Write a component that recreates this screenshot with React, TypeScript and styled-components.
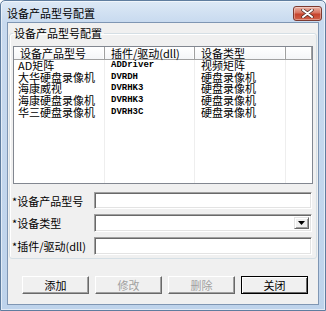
import React from 'react';
import styled, { createGlobalStyle } from 'styled-components';

const GlobalStyle = createGlobalStyle`
  html, body {
    margin: 0;
    padding: 0;
    background: #ffffff;
  }
  body {
    font-family: "Noto Sans CJK SC", "Liberation Sans", sans-serif;
    font-size: 11px;
    color: #000;
  }
  * {
    box-sizing: border-box;
  }
`;

const columns = [
  { title: '设备产品型号', width: 91, pad: 4 },
  { title: '插件/驱动(dll)', width: 90, pad: 6 },
  { title: '设备类型', width: 91, pad: 6 },
  { title: '', width: 26, pad: 6 },
];

const rows = [
  ['AD矩阵', 'ADDriver', '视频矩阵'],
  ['大华硬盘录像机', 'DVRDH', '硬盘录像机'],
  ['海康威视', 'DVRHK3', '硬盘录像机'],
  ['海康硬盘录像机', 'DVRHK3', '硬盘录像机'],
  ['华三硬盘录像机', 'DVRH3C', '硬盘录像机'],
];

const App: React.FC = () => {
  return (
    <>
      <GlobalStyle />
      <Window>
        <TitleBar>
          <Title>设备产品型号配置</Title>
          <CloseButton>
            <svg width="13" height="9" viewBox="0 0 13 9">
              <path
                d="M2 1 L11 8 M11 1 L2 8"
                stroke="#4a2a26"
                strokeWidth="3.4"
                strokeLinecap="round"
              />
              <path
                d="M2 1 L11 8 M11 1 L2 8"
                stroke="#ffffff"
                strokeWidth="2"
                strokeLinecap="round"
              />
            </svg>
          </CloseButton>
        </TitleBar>
        <Client>
          <GroupBox>
            <Legend>设备产品型号配置</Legend>
            <ListView>
              <ListHeader>
                {columns.map((col, i) => (
                  <HeaderCell key={i} $width={col.width}>
                    {col.title}
                  </HeaderCell>
                ))}
              </ListHeader>
              <ListBody>
                {columns.map((col, ci) => (
                  <BodyColumn key={ci} $width={col.width} $last={ci === columns.length - 1}>
                    {ci < 3 &&
                      rows.map((r, ri) => (
                        <Cell key={ri} $pad={col.pad} $mono={ci === 1}>
                          {r[ci]}
                        </Cell>
                      ))}
                  </BodyColumn>
                ))}
              </ListBody>
            </ListView>

            <FieldRow>
              <FieldLabel>*设备产品型号</FieldLabel>
              <TextBox />
            </FieldRow>
            <FieldRow $tall>
              <FieldLabel>*设备类型</FieldLabel>
              <ComboBox>
                <DropButton>
                  <svg width="7" height="4" viewBox="0 0 7 4">
                    <path d="M0 0 H7 L3.5 4 Z" fill="#000" />
                  </svg>
                </DropButton>
              </ComboBox>
            </FieldRow>
            <FieldRow $tall>
              <FieldLabel>*插件/驱动(dll)</FieldLabel>
              <TextBox />
            </FieldRow>
          </GroupBox>

          <ButtonRow>
            <PushButton>添加</PushButton>
            <PushButton disabled>修改</PushButton>
            <PushButton disabled>删除</PushButton>
            <PushButton $default>关闭</PushButton>
          </ButtonRow>
        </Client>
      </Window>
    </>
  );
};

const Window = styled.div`
  width: 326px;
  height: 311px;
  border: 1px solid #5f7d9f;
  border-radius: 5px 5px 0 0;
  padding: 0 6px 5px 6px;
  background: linear-gradient(to bottom, #dde9f6 0px, #c8daef 21px, #bed3eb 100%);
  box-shadow: inset 0 0 0 1px rgba(255, 255, 255, 0.55);
  display: flex;
  flex-direction: column;
`;

const TitleBar = styled.div`
  height: 21px;
  display: flex;
  align-items: center;
  justify-content: space-between;
  margin-right: -3px;
`;

const Title = styled.span`
  line-height: 12px;
  margin-top: 2px;
  color: #000;
`;

const CloseButton = styled.div`
  width: 29px;
  height: 15px;
  margin-top: 3px;
  border: 1px solid #7d3a30;
  border-radius: 3px;
  background: linear-gradient(to bottom, #eab3a6 0%, #d8735f 45%, #c7432d 55%, #d0624a 100%);
  box-shadow: inset 0 0 0 1px rgba(255, 255, 255, 0.35);
  display: flex;
  align-items: center;
  justify-content: center;
`;

const Client = styled.div`
  height: 283px;
  border: 1px solid #7f96b3;
  background: #f0f0f0;
  padding: 4px 1px 0 1px;
  display: flex;
  flex-direction: column;
`;

const GroupBox = styled.fieldset`
  margin: 0;
  padding: 7px 3px 3px 3px;
  border: 1px solid #d5dfe5;
  border-radius: 3px;
  box-shadow: 1px 1px 0 #ffffff inset;
  min-width: 0;
`;

const Legend = styled.legend`
  padding: 0 2px 0 1px;
  line-height: 12px;
`;

const ListView = styled.div`
  height: 138px;
  border: 1px solid #828790;
  background: #ffffff;
  display: flex;
  flex-direction: column;
`;

const ListHeader = styled.div`
  height: 13px;
  flex: none;
  display: flex;
  background: linear-gradient(to bottom, #ffffff, #f4f5f7);
  border-bottom: 1px solid #a0a0a0;
`;

const HeaderCell = styled.div<{ $width: number }>`
  width: ${(p) => p.$width}px;
  flex: none;
  padding-left: 6px;
  line-height: 12px;
  border-right: 1px solid #a0a0a0;
  box-shadow: inset -1px 0 0 #ffffff;
  white-space: nowrap;
`;

const ListBody = styled.div`
  flex: 1;
  display: flex;
`;

const BodyColumn = styled.div<{ $width: number; $last?: boolean }>`
  width: ${(p) => p.$width}px;
  flex: none;
  border-right: ${(p) => (p.$last ? 'none' : '1px solid #eeeeee')};
`;

const Cell = styled.div<{ $pad: number; $mono?: boolean }>`
  height: 11.7px;
  line-height: 11.7px;
  padding-left: ${(p) => p.$pad}px;
  white-space: nowrap;
  font-family: ${(p) =>
    p.$mono ? '"Liberation Mono", monospace' : '"Noto Sans CJK SC", sans-serif'};
  font-size: ${(p) => (p.$mono ? '9px' : '11px')};
  font-weight: ${(p) => (p.$mono ? 'bold' : 'normal')};
`;

const FieldRow = styled.div<{ $tall?: boolean }>`
  display: flex;
  align-items: center;
  height: ${(p) => (p.$tall ? 18 : 17)}px;
  margin-top: ${(p) => (p.$tall ? 5 : 8)}px;
`;

const FieldLabel = styled.div`
  width: 82px;
  flex: none;
  margin-left: -1px;
  white-space: nowrap;
  line-height: 12px;
`;

const sunken = `
  border: 1px solid;
  border-color: #a0a0a0 #ffffff #ffffff #a0a0a0;
  box-shadow: inset 1px 1px 0 #696969, inset -1px -1px 0 #e3e3e3;
  background: #ffffff;
`;

const TextBox = styled.div`
  ${sunken}
  width: 218px;
  height: 100%;
`;

const ComboBox = styled.div`
  ${sunken}
  width: 218px;
  height: 100%;
  display: flex;
  justify-content: flex-end;
  align-items: stretch;
  padding: 2px;
`;

const DropButton = styled.div`
  width: 15px;
  background: #f0f0f0;
  border: 1px solid;
  border-color: #e3e3e3 #696969 #696969 #e3e3e3;
  box-shadow: inset 1px 1px 0 #ffffff, inset -1px -1px 0 #a0a0a0;
  display: flex;
  align-items: center;
  justify-content: center;
`;

const ButtonRow = styled.div`
  display: flex;
  gap: 6px;
  padding-left: 13px;
  margin-top: 17px;
`;

const PushButton = styled.button<{ $default?: boolean }>`
  width: 67px;
  height: 18px;
  padding: 0;
  font-family: "Noto Sans CJK SC", sans-serif;
  font-size: 11px;
  line-height: 12px;
  color: #000;
  background: #f0f0f0;
  border: 1px solid;
  border-color: ${(p) => (p.$default ? '#000000' : '#ffffff #696969 #696969 #ffffff')};
  box-shadow: ${(p) =>
    p.$default
      ? 'inset 1px 1px 0 #ffffff, inset -1px -1px 0 #696969'
      : 'inset -1px -1px 0 #a0a0a0'};
  outline: none;
  &:disabled {
    color: #a0a0a0;
  }
`;

export default App;
